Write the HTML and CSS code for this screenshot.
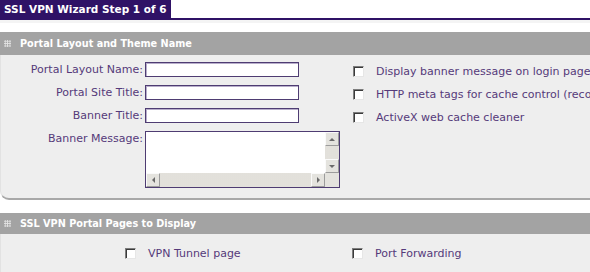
FILE: index.html
```html
<!DOCTYPE html>
<html>
<head>
<link rel="stylesheet" href="styles.css">
</head>
<body>

<div class="wizard-bar">
  <span class="wizard-tab">SSL VPN Wizard Step 1 of 6</span>
</div>

<div class="panel">
  <div class="panel-head"><span class="grip"></span>Portal Layout and Theme Name</div>
  <div class="panel-body layout-body">
    <div class="fields">
      <label>Portal Layout Name:</label><input type="text">
      <label>Portal Site Title:</label><input type="text">
      <label>Banner Title:</label><input type="text">
      <label>Banner Message:</label>
      <div class="memo">
        <textarea wrap="off"></textarea>
        <div class="vbar">
          <span class="sbtn"><i class="arr up"></i></span>
          <span class="track"></span>
          <span class="sbtn"><i class="arr down"></i></span>
        </div>
        <div class="hbar">
          <span class="sbtn"><i class="arr left"></i></span>
          <span class="track"></span>
          <span class="sbtn"><i class="arr right"></i></span>
        </div>
        <div class="corner"></div>
      </div>
    </div>
    <div class="options">
      <div class="opt"><input type="checkbox"><span>Display banner message on login page</span></div>
      <div class="opt"><input type="checkbox"><span>HTTP meta tags for cache control (recommended)</span></div>
      <div class="opt"><input type="checkbox"><span>ActiveX web cache cleaner</span></div>
    </div>
  </div>
</div>

<div class="panel second">
  <div class="panel-head"><span class="grip"></span>SSL VPN Portal Pages to Display</div>
  <div class="panel-body pages-body">
    <div class="opt page-opt"><input type="checkbox"><span>VPN Tunnel page</span></div>
    <div class="opt"><input type="checkbox"><span>Port Forwarding</span></div>
  </div>
</div>

</body>
</html>
```

FILE: styles.css
```css
body {
  margin: 0;
  font-family: "DejaVu Sans", Verdana, sans-serif;
  font-size: 11px;
  color: #553a7a;
  background: #fff;
  overflow: hidden;
}

.wizard-bar {
  height: 18px;
  border-bottom: 2px solid #2f1266;
  box-shadow: 0 3px 0 #f4f4f4;
}

.wizard-tab {
  display: inline-block;
  width: 167px;
  height: 18px;
  line-height: 18px;
  padding-left: 4px;
  background: #2f1266;
  color: #fff;
  font-weight: bold;
  font-size: 10.5px;
  white-space: nowrap;
}

.panel {
  margin-top: 12px;
}

.panel.second {
  margin-top: 13px;
}

.panel-head {
  display: flex;
  align-items: center;
  gap: 9px;
  height: 23px;
  padding-left: 4px;
  background: #a3a3a3;
  color: #fff;
  font-weight: bold;
  font-size: 9.7px;
}

.second .panel-head {
  height: 21px;
}

.grip {
  width: 7px;
  height: 7px;
  background-image: radial-gradient(circle, #e4e4e4 0.8px, transparent 1px);
  background-size: 2.4px 2.4px;
}

.panel-body {
  background: #eeeeee;
  border-left: 1px solid #e2e2e2;
}

.layout-body {
  display: flex;
  height: 136px;
  padding-top: 7px;
  border-bottom: 2px solid #a8a8a8;
  border-bottom-left-radius: 9px;
}

.fields {
  display: grid;
  grid-template-columns: 142px 154px;
  column-gap: 2px;
  row-gap: 8px;
  align-content: start;
}

.fields label {
  text-align: right;
  line-height: 15px;
  white-space: nowrap;
}

.fields input {
  box-sizing: border-box;
  width: 154px;
  height: 15px;
  margin: 0;
  border: 1px solid #4e3c72;
  box-shadow: inset 1px 1px 0 #b8aecb;
  background: #fff;
}

/* multi-line box with classic scrollbars */
.memo {
  box-sizing: border-box;
  display: grid;
  grid-template-columns: 1fr 14px;
  grid-template-rows: 1fr 14px;
  width: 195px;
  height: 57px;
  border: 1px solid #4e3c72;
  background: #fff;
}

.memo textarea {
  margin: 0;
  padding: 0;
  border: 0;
  resize: none;
  overflow: hidden;
  background: #fff;
}

.vbar, .hbar {
  display: flex;
  background: #ecebe6;
}

.vbar {
  flex-direction: column;
}

.track {
  flex: 1;
  background-image: radial-gradient(circle, #d6d4cc 0.6px, transparent 0.8px);
  background-size: 2px 2px;
}

.sbtn {
  display: flex;
  align-items: center;
  justify-content: center;
  width: 14px;
  height: 14px;
  box-sizing: border-box;
  border: 1px solid;
  border-color: #fafafa #9c9c9c #9c9c9c #fafafa;
  background: #e4e3de;
}

.arr {
  width: 0;
  height: 0;
  border: 3px solid transparent;
}

.arr.up { border-bottom-color: #6a6a6a; border-top-width: 0; }
.arr.down { border-top-color: #6a6a6a; border-bottom-width: 0; }
.arr.left { border-right-color: #6a6a6a; border-left-width: 0; }
.arr.right { border-left-color: #6a6a6a; border-right-width: 0; }

.corner {
  background: #e4e3de;
}

.options {
  display: flex;
  flex-direction: column;
  gap: 8px;
  margin-left: 54px;
  padding-top: 2px;
  overflow: hidden;
}

.opt {
  display: flex;
  align-items: center;
  gap: 12px;
  height: 15px;
  white-space: nowrap;
}

.opt input {
  appearance: none;
  flex: none;
  box-sizing: border-box;
  width: 11px;
  height: 11px;
  margin: 0;
  border: 1px solid;
  border-color: #7d7d7d #e6e6e6 #e6e6e6 #7d7d7d;
  box-shadow: inset 1px 1px 0 #3a3a3a;
  background: #fff;
}

.pages-body {
  display: flex;
  align-items: center;
  height: 38px;
  padding-left: 124px;
}

.page-opt {
  width: 227px;
}
```
